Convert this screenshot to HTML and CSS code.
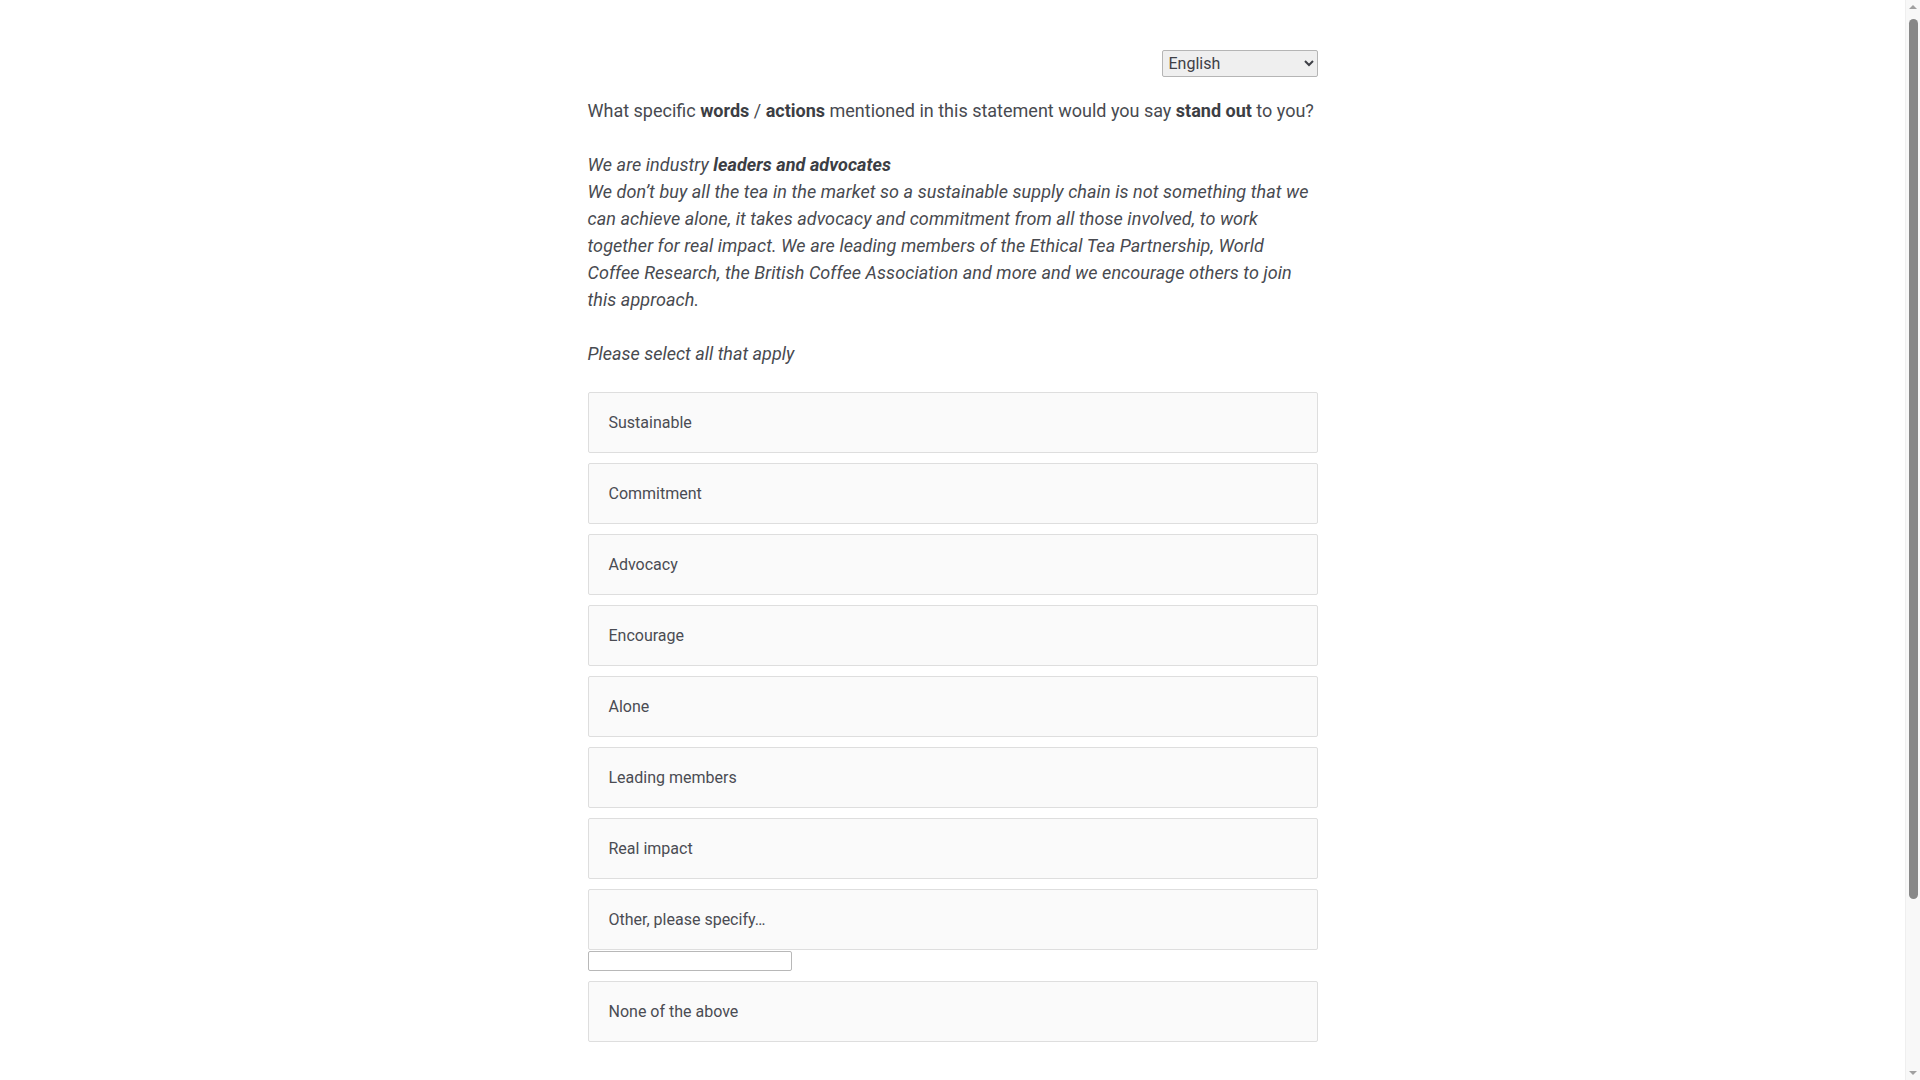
FILE: index.html
```html
<!DOCTYPE html>
<html lang="en">
<head>
<meta charset="utf-8">
<title>Survey</title>
<link rel="stylesheet" href="styles.css">
</head>
<body>
<div class="page">
  <div class="lang-row">
    <select class="lang-select">
      <option>English</option>
    </select>
  </div>
  <div class="question">
    <p class="q-text">What specific <b>words</b> / <b>actions</b> mentioned in this statement would you say <b>stand out</b> to you?</p>
    <p class="statement"><i>We are industry <b>leaders and advocates</b><br>We don’t buy all the tea in the market so a sustainable supply chain is not something that we can achieve alone, it takes advocacy and commitment from all those involved, to work together for real impact. We are leading members of the Ethical Tea Partnership, World Coffee Research, the British Coffee Association and more and we encourage others to join this approach.</i></p>
    <p class="instruction"><i>Please select all that apply</i></p>
  </div>
  <div class="options">
    <label class="option">Sustainable</label>
    <label class="option">Commitment</label>
    <label class="option">Advocacy</label>
    <label class="option">Encourage</label>
    <label class="option">Alone</label>
    <label class="option">Leading members</label>
    <label class="option">Real impact</label>
    <div class="other-group">
      <label class="option">Other, please specify…</label>
      <input type="text" class="other-input">
    </div>
    <label class="option">None of the above</label>
  </div>
</div>
<div class="scrollbar" aria-hidden="true">
  <span class="sb-arrow sb-up"></span>
  <span class="sb-thumb"></span>
  <span class="sb-arrow sb-down"></span>
</div>
</body>
</html>
```

FILE: styles.css
```css
html, body {
  margin: 0;
  padding: 0;
  background: #ffffff;
}
body {
  font-family: Roboto, "Liberation Sans", sans-serif;
  color: #484a50;
  padding-right: 15px;
}
.page {
  width: 730px;
  margin: 0 auto;
  padding-top: 50px;
  padding-bottom: 248px;
}
.lang-row {
  display: flex;
  justify-content: flex-end;
}
.lang-select {
  width: 156px;
  height: 27px;
  font-family: Roboto, "Liberation Sans", sans-serif;
  font-size: 16px;
  color: #3e4046;
  background: #efefef;
  border: 1px solid #b5b5b5;
  border-radius: 2px;
  padding: 0 2px;
  margin: 0;
}
.question {
  margin-top: 20px;
  font-size: 18px;
  line-height: 27px;
}
.question p {
  margin: 0 0 27px 0;
}
.statement {
  letter-spacing: 0.07px;
}
.question b {
  font-weight: 700;
  color: #3c3e44;
}
.question p.instruction {
  margin-bottom: 25px;
}
.options {
  display: flex;
  flex-direction: column;
  gap: 10px;
}
.option {
  display: flex;
  align-items: center;
  box-sizing: border-box;
  height: 61px;
  padding: 0 20px;
  background: #fafafa;
  border: 1px solid #dedede;
  border-radius: 2px;
  font-size: 16px;
  color: #4a4c53;
}
.other-group {
  display: flex;
  flex-direction: column;
  align-items: flex-start;
  gap: 1px;
}
.other-group .option {
  width: 100%;
}
.other-input {
  box-sizing: border-box;
  width: 204px;
  height: 20px;
  margin: 0;
  border: 1px solid #b8b8b8;
  border-radius: 2px;
  background: #fff;
}
.scrollbar {
  position: fixed;
  top: 0;
  right: 0;
  width: 15px;
  height: 100vh;
  background: #f8f8f8;
  border-left: 1px solid #efefef;
  box-sizing: border-box;
}
.sb-thumb {
  position: absolute;
  top: 19px;
  left: 3px;
  width: 9px;
  height: 880px;
  border-radius: 5px;
  background: #888888;
}
.sb-arrow {
  position: absolute;
  left: 3px;
  width: 0;
  height: 0;
  border-left: 4px solid transparent;
  border-right: 4px solid transparent;
}
.sb-up {
  top: 5px;
  border-bottom: 4px solid #a0a0a0;
}
.sb-down {
  bottom: 5px;
  border-top: 4px solid #a0a0a0;
}
```
